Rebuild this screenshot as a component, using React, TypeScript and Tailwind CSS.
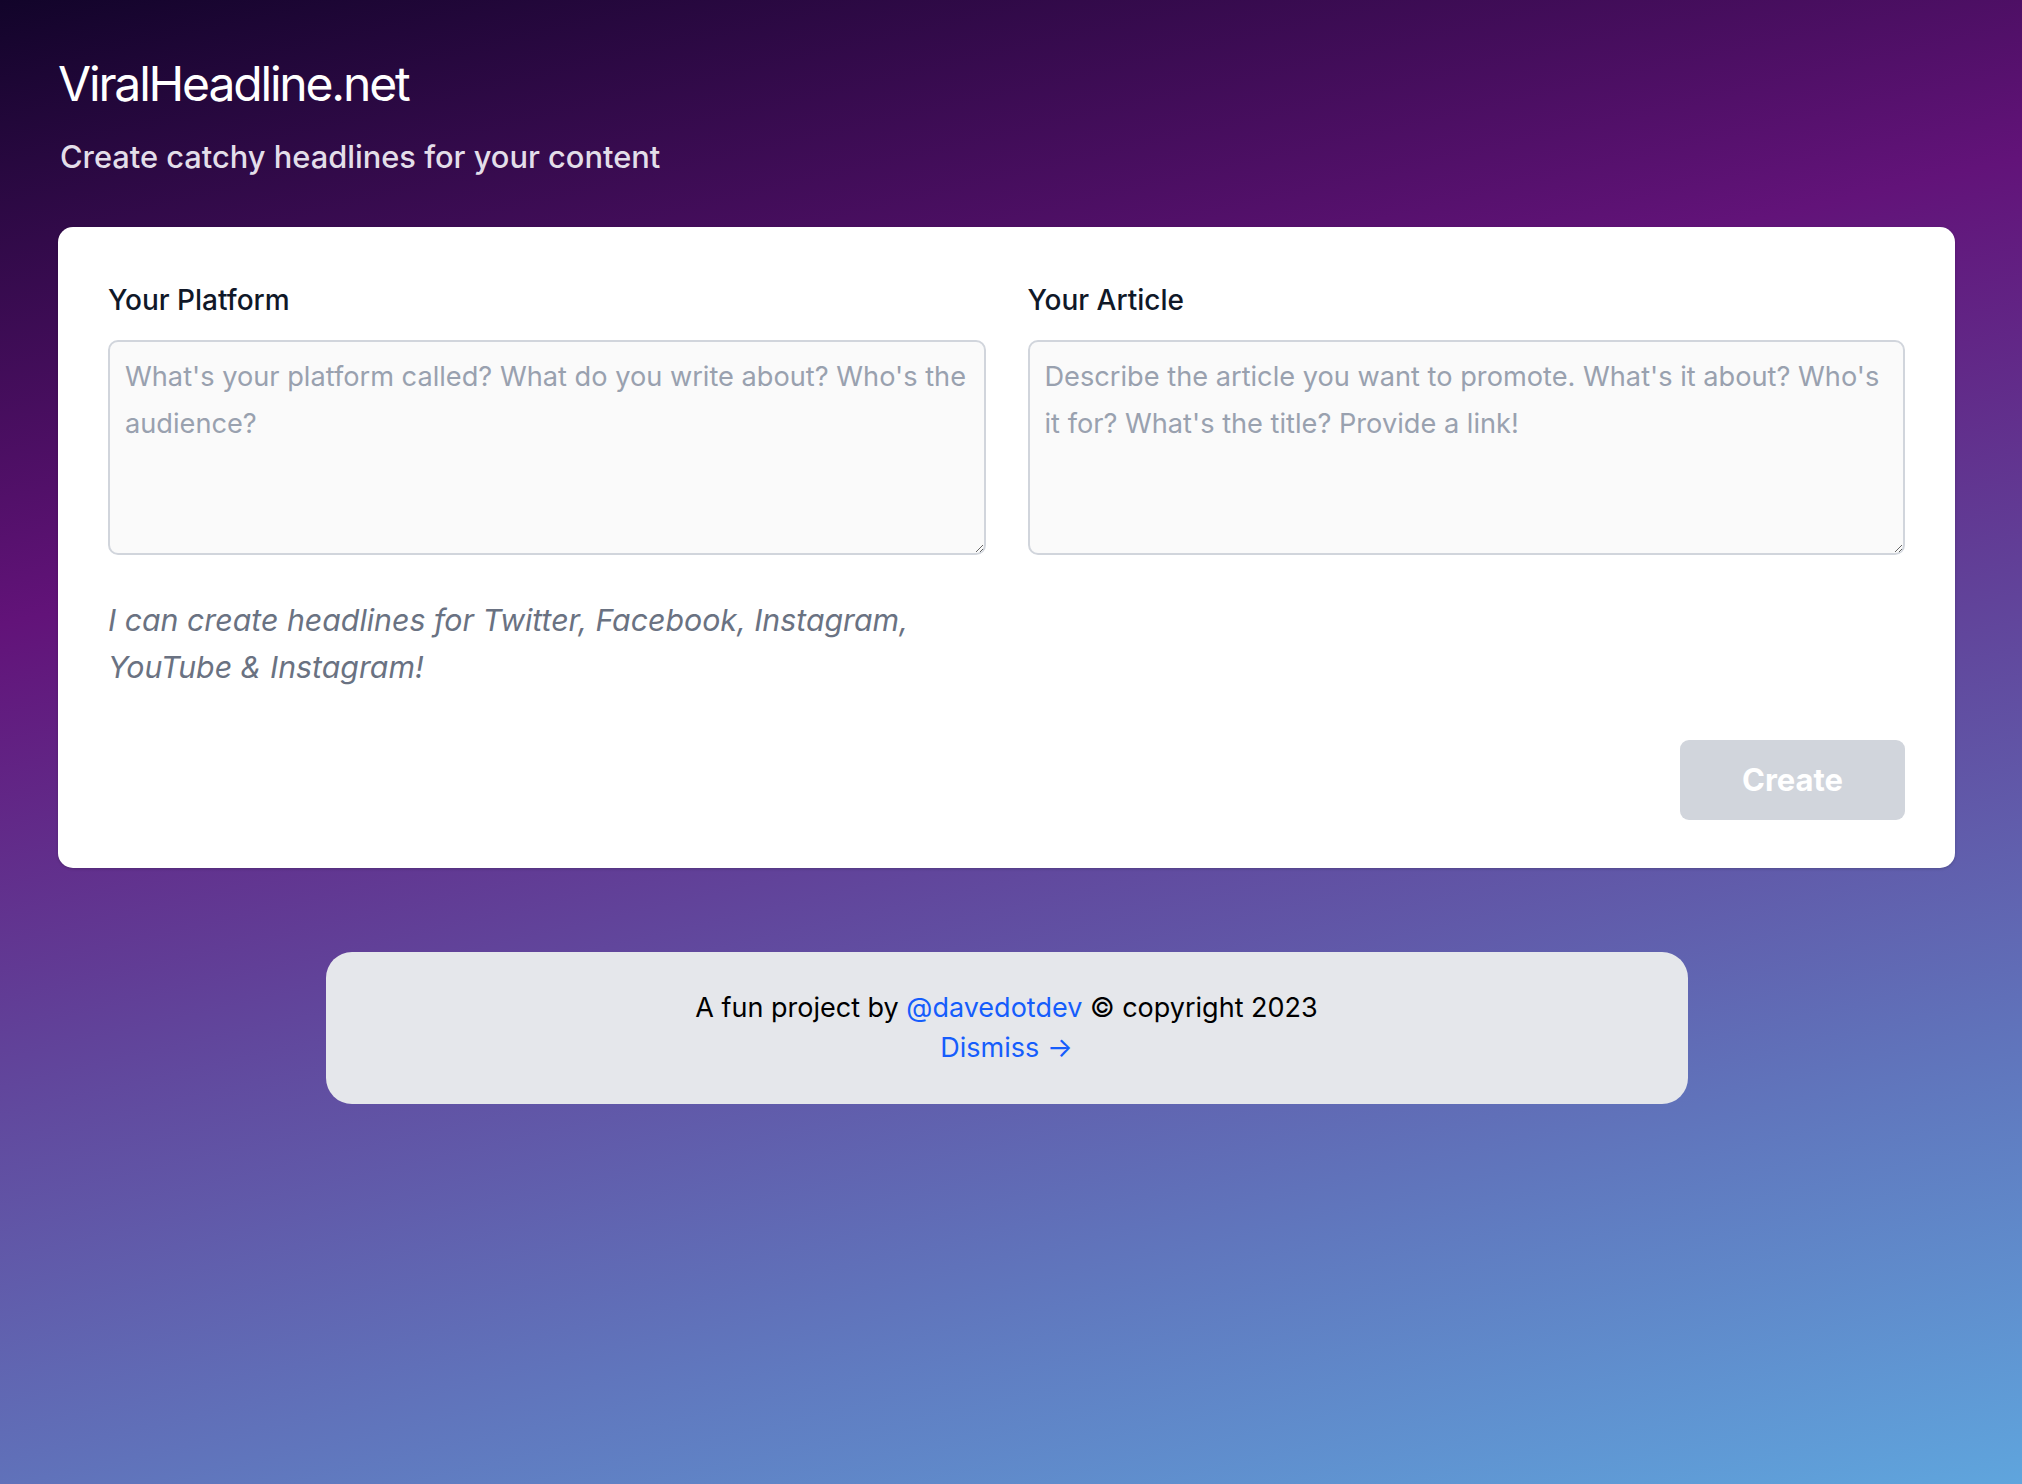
import React from 'react';

export default function App() {
  return (
    <div className="min-h-screen w-full bg-[linear-gradient(167deg,#12042a_0%,#621379_32%,#5fa5dd_100%)] font-['Inter',sans-serif]">
      <div className="w-[2013px] px-[58px] pt-[60px] pb-[60px]">
        <h1 className="text-[48px] leading-[48px] text-white tracking-[-0.045em]">ViralHeadline.net</h1>
        <p className="mt-[31px] pl-[2px] text-[30.8px] leading-[36px] font-medium text-[#e3dee9]">
          Create catchy headlines for your content
        </p>

        <div className="mt-[52px] rounded-[15px] bg-white px-[50px] pt-[55px] pb-[48px] shadow-[0_1px_3px_rgba(0,0,0,0.18)]">
          <div className="grid grid-cols-2 gap-[42px]">
            <div className="flex flex-col">
              <label className="text-[28px] leading-[36px] font-medium text-gray-900">Your Platform</label>
              <textarea
                className="mt-[22px] h-[215px] w-full rounded-[10px] border-2 border-gray-300 bg-[#fafafa] pl-[15px] pr-[10px] pt-[11px] text-[27.2px] leading-[47px] text-gray-900 placeholder:text-gray-400 outline-none"
                placeholder="What's your platform called? What do you write about? Who's the audience?"
              />
            </div>
            <div className="flex flex-col">
              <label className="text-[28px] leading-[36px] font-medium text-gray-900">Your Article</label>
              <textarea
                className="mt-[22px] h-[215px] w-full rounded-[10px] border-2 border-gray-300 bg-[#fafafa] pl-[15px] pr-[10px] pt-[11px] text-[27.2px] leading-[47px] text-gray-900 placeholder:text-gray-400 outline-none"
                placeholder="Describe the article you want to promote. What's it about? Who's it for? What's the title? Provide a link!"
              />
            </div>
          </div>

          <p className="mt-[42px] w-[877px] text-[30.3px] leading-[47px] italic text-gray-500">
            I can create headlines for Twitter, Facebook, Instagram, YouTube &amp; Instagram!
          </p>

          <div className="mt-[49px] flex justify-end">
            <button className="h-[80px] w-[225px] rounded-[9px] bg-gray-300 text-[31px] font-bold text-white">
              Create
            </button>
          </div>
        </div>

        <div className="mx-auto mt-[84px] w-[1362px] rounded-[26px] bg-gray-200 py-[36px] text-center text-[27px] leading-[40px] text-black">
          <p>
            A fun project by <a className="text-blue-600">@davedotdev</a> © copyright 2023
          </p>
          <p>
            <a className="text-blue-600">Dismiss →</a>
          </p>
        </div>
      </div>
    </div>
  );
}
